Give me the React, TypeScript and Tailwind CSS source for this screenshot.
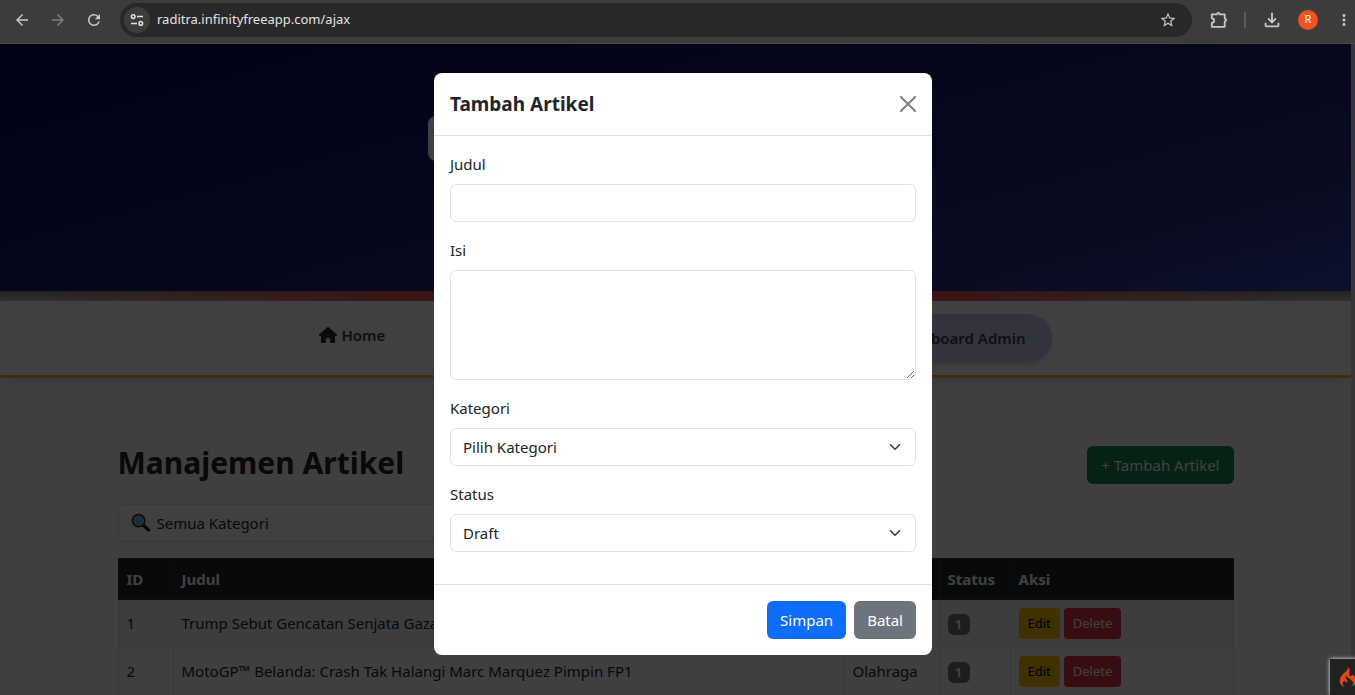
import React, { useState } from "react";
import { FaHouse } from "react-icons/fa6";
import { SiCodeigniter } from "react-icons/si";
import {
  MdArrowBack,
  MdArrowForward,
  MdMoreVert,
  MdOutlineFileDownload,
  MdRefresh,
  MdStarBorder,
} from "react-icons/md";

type Article = { id: number; title: string; category: string; status: string };

const articles: Article[] = [
  { id: 1, title: "Trump Sebut Gencatan Senjata Gaza", category: "", status: "1" },
  { id: 2, title: "MotoGP™ Belanda: Crash Tak Halangi Marc Marquez Pimpin FP1", category: "Olahraga", status: "1" },
];

function BrowserBar() {
  return (
    <div className="flex h-11 shrink-0 items-center border-b border-[#4a4a4a] bg-[#3c3c3c] pb-1 text-[#c7c7c7]">
      <div className="flex w-[120px] items-center gap-[18px] pl-[13px]">
        <button aria-label="Back"><MdArrowBack size={18} /></button>
        <button aria-label="Forward" className="text-[#7d7d7d]"><MdArrowForward size={18} /></button>
        <button aria-label="Reload"><MdRefresh size={18} /></button>
      </div>
      <div className="flex h-[34px] flex-1 items-center rounded-full bg-[#282828] pr-[15px] pl-1">
        <button aria-label="Site information" className="flex size-[26px] items-center justify-center rounded-full bg-[#3c3c3c]">
          <svg width="14" height="14" viewBox="0 0 14 14" fill="none" stroke="#e3e3e3" strokeWidth="1.5">
            <circle cx="3.2" cy="3.6" r="1.8" />
            <path d="M7 3.6h6M1 10.4h6" />
            <circle cx="10.8" cy="10.4" r="1.8" />
          </svg>
        </button>
        <input
          aria-label="Address"
          defaultValue="raditra.infinityfreeapp.com/ajax"
          className="ml-[7px] min-w-0 flex-1 bg-transparent text-[13px] text-[#e3e3e3] outline-none"
        />
        <button aria-label="Bookmark"><MdStarBorder size={18} /></button>
      </div>
      <div className="flex items-center pr-1.5 pl-[17px]">
        <button aria-label="Extensions">
          <svg width="19" height="20" viewBox="0 0 19 20" fill="none" stroke="currentColor" strokeWidth="1.8" strokeLinejoin="round">
            <path d="M2.8 4.4h5.1a1.4 1.4 0 0 1 2.8 0h5v4.2a1.4 1.4 0 0 1 0 2.8v5.4H2.8v-3.9a2.3 2.3 0 0 0 0-4.6z" />
          </svg>
        </button>
        <span className="ml-4 h-4 w-0.5 bg-[#5c5c5c]" />
        <button aria-label="Downloads" className="ml-[15px]"><MdOutlineFileDownload size={22} /></button>
        <button aria-label="Profile" className="ml-[15px] flex size-5 items-center justify-center rounded-full bg-[#f4511e] text-[11px] text-white">R</button>
        <button aria-label="Menu" className="ml-[17px] -mr-1"><MdMoreVert size={18} /></button>
      </div>
    </div>
  );
}

function SiteHeader() {
  return (
    <>
      <header className="flex h-[247px] justify-center bg-linear-[165deg,#080858_0%,#161a6c_40%,#262c7e_80%,#3444b4_100%] pt-[72px]">
        <div className="h-[45px] w-[495px] rounded-lg bg-white" />
      </header>
      <div className="h-2.5 bg-[linear-gradient(90deg,transparent,#f04a4a_35%,#f04a4a_65%,transparent),linear-gradient(180deg,#888,#ccc)]" />
      <nav className="flex h-[77px] justify-center border-b-[3px] border-[#ffb52e] bg-white text-[#2c3e50] shadow-[0_4px_20px_rgba(0,0,0,0.12)]">
        <div className="flex w-full max-w-[752px] items-start justify-between pt-[13px] pl-[19px] font-semibold">
          <a href="#home" className="mt-[9px] flex items-center gap-[5px] leading-6"><FaHouse size={18} className="text-[#1a2c3c]" />Home</a>
          <a href="#dashboard" className="flex h-12 items-center rounded-full bg-[#cccaf8] px-[26px] shadow-md">Dashboard Admin</a>
        </div>
      </nav>
    </>
  );
}

function SearchGlyph() {
  return (
    <svg width="20" height="20" viewBox="0 0 20 20" className="pointer-events-none absolute top-[9px] left-[13px]">
      <path d="M12 12l5.5 5" stroke="#222" strokeWidth="3.4" strokeLinecap="round" />
      <circle cx="7.6" cy="7.6" r="6.2" fill="#6fb4ea" stroke="#222" strokeWidth="1.5" />
    </svg>
  );
}

function Articles({ onAdd }: { onAdd: () => void }) {
  return (
    <main className="mx-auto max-w-[1140px] px-3 pt-[67px]">
      <div className="mb-5 flex items-end justify-between">
        <h1 className="pb-[3px] text-3xl leading-9 font-bold">Manajemen Artikel</h1>
        <button onClick={onAdd} className="h-[38px] rounded-md bg-[#198754] px-3.5 text-white">+ Tambah Artikel</button>
      </div>
      <div className="relative mb-4 w-1/2">
        <SearchGlyph />
        <select aria-label="Filter kategori" className="h-[38px] w-full appearance-none rounded-md border border-[#dee2e6] bg-white pl-[38px]">
          <option>Semua Kategori</option>
        </select>
      </div>
      <table className="w-full table-fixed border-collapse text-left">
        <colgroup>
          <col className="w-[55px]" />
          <col />
          <col className="w-[95px]" />
          <col className="w-[71px]" />
          <col className="w-[223px]" />
        </colgroup>
        <thead className="bg-[#212529] text-white">
          <tr className="h-[41px]">
            {["ID", "Judul", "Kategori", "Status", "Aksi"].map((h) => (
              <th key={h} scope="col" className="border border-[#373b3e] px-2 font-bold">{h}</th>
            ))}
          </tr>
        </thead>
        <tbody>
          {articles.map((a) => (
            <tr key={a.id} className="h-12 odd:bg-[#f2f2f2] [&>td]:border [&>td]:border-[#dee2e6] [&>td]:px-2">
              <td>{a.id}</td>
              <td>{a.title}</td>
              <td>{a.category}</td>
              <td>
                <span className="inline-flex h-[21px] w-[22px] items-center justify-center rounded-md bg-[#6c757d] text-xs font-bold text-white">{a.status}</span>
              </td>
              <td>
                <div className="flex gap-1 text-[13px]">
                  <button className="h-[31px] rounded bg-[#ffc107] px-[9px] text-black">Edit</button>
                  <button className="h-[31px] rounded bg-[#dc3545] px-[9px] text-white">Delete</button>
                </div>
              </td>
            </tr>
          ))}
        </tbody>
      </table>
    </main>
  );
}

const field = "block w-full rounded-md border border-[#dee2e6] bg-white px-3";

function SelectField({ id, label, options }: { id: string; label: string; options: string[] }) {
  return (
    <div className="mb-4">
      <label htmlFor={id} className="mb-2 block leading-6">{label}</label>
      <div className="relative">
        <select id={id} className={`${field} h-[38px] appearance-none`}>
          {options.map((o) => <option key={o}>{o}</option>)}
        </select>
        <svg width="12" height="12" viewBox="0 0 16 16" fill="none" stroke="#343a40" strokeWidth="2" strokeLinecap="round" strokeLinejoin="round" className="pointer-events-none absolute top-[13px] right-[15px]">
          <path d="m2 5 6 6 6-6" />
        </svg>
      </div>
    </div>
  );
}

function ArticleDialog({ onClose }: { onClose: () => void }) {
  return (
    <div className="absolute inset-0 flex items-start justify-center bg-black/75 pt-[29px] pl-[11px]">
      <form role="dialog" aria-labelledby="dialog-title" onSubmit={(e) => e.preventDefault()} className="w-full max-w-[498px] rounded-lg bg-white">
        <div className="flex h-[63px] items-center justify-between border-b border-[#dee2e6] px-4">
          <h2 id="dialog-title" className="text-[19px] font-bold">Tambah Artikel</h2>
          <button type="button" aria-label="Tutup" onClick={onClose}>
            <svg width="16" height="16" viewBox="0 0 16 16" stroke="#7f7f7f" strokeWidth="2" strokeLinecap="round">
              <path d="M1 1l14 14M15 1L1 15" />
            </svg>
          </button>
        </div>
        <div className="p-4">
          <div className="mb-4">
            <label htmlFor="judul" className="mb-2 block leading-6">Judul</label>
            <input id="judul" type="text" className={`${field} h-[38px]`} />
          </div>
          <div className="mb-4">
            <label htmlFor="isi" className="mb-2 block leading-6">Isi</label>
            <textarea id="isi" className={`${field} h-[110px] resize-y py-1.5`} />
          </div>
          <SelectField id="kategori" label="Kategori" options={["Pilih Kategori", "Olahraga"]} />
          <SelectField id="status" label="Status" options={["Draft", "Publish"]} />
        </div>
        <div className="flex justify-end gap-2 border-t border-[#dee2e6] p-4 text-white">
          <button type="submit" className="h-[38px] rounded-md bg-[#0d6efd] px-[13px]">Simpan</button>
          <button type="button" onClick={onClose} className="h-[38px] rounded-md bg-[#6c757d] px-[13px]">Batal</button>
        </div>
      </form>
    </div>
  );
}

export default function App() {
  const [open, setOpen] = useState(true);
  return (
    <div className="flex h-screen flex-col overflow-hidden font-['Noto_Sans','Open_Sans',sans-serif] text-[15px] text-[#212529]">
      <BrowserBar />
      <div className="relative min-h-0 flex-1 overflow-hidden bg-[#dcdcdc] pr-1">
        <div className="h-full overflow-hidden bg-[#fcfcfc]">
          <SiteHeader />
          <Articles onAdd={() => setOpen(true)} />
        </div>
        {open && <ArticleDialog onClose={() => setOpen(false)} />}
        <button aria-label="Debug toolbar" className="absolute -right-[11px] bottom-0 flex h-9 w-9 items-center justify-center bg-[#222] text-[#dd4814] shadow-[0_0_4px_#fff]">
          <SiCodeigniter size={20} />
        </button>
      </div>
    </div>
  );
}
